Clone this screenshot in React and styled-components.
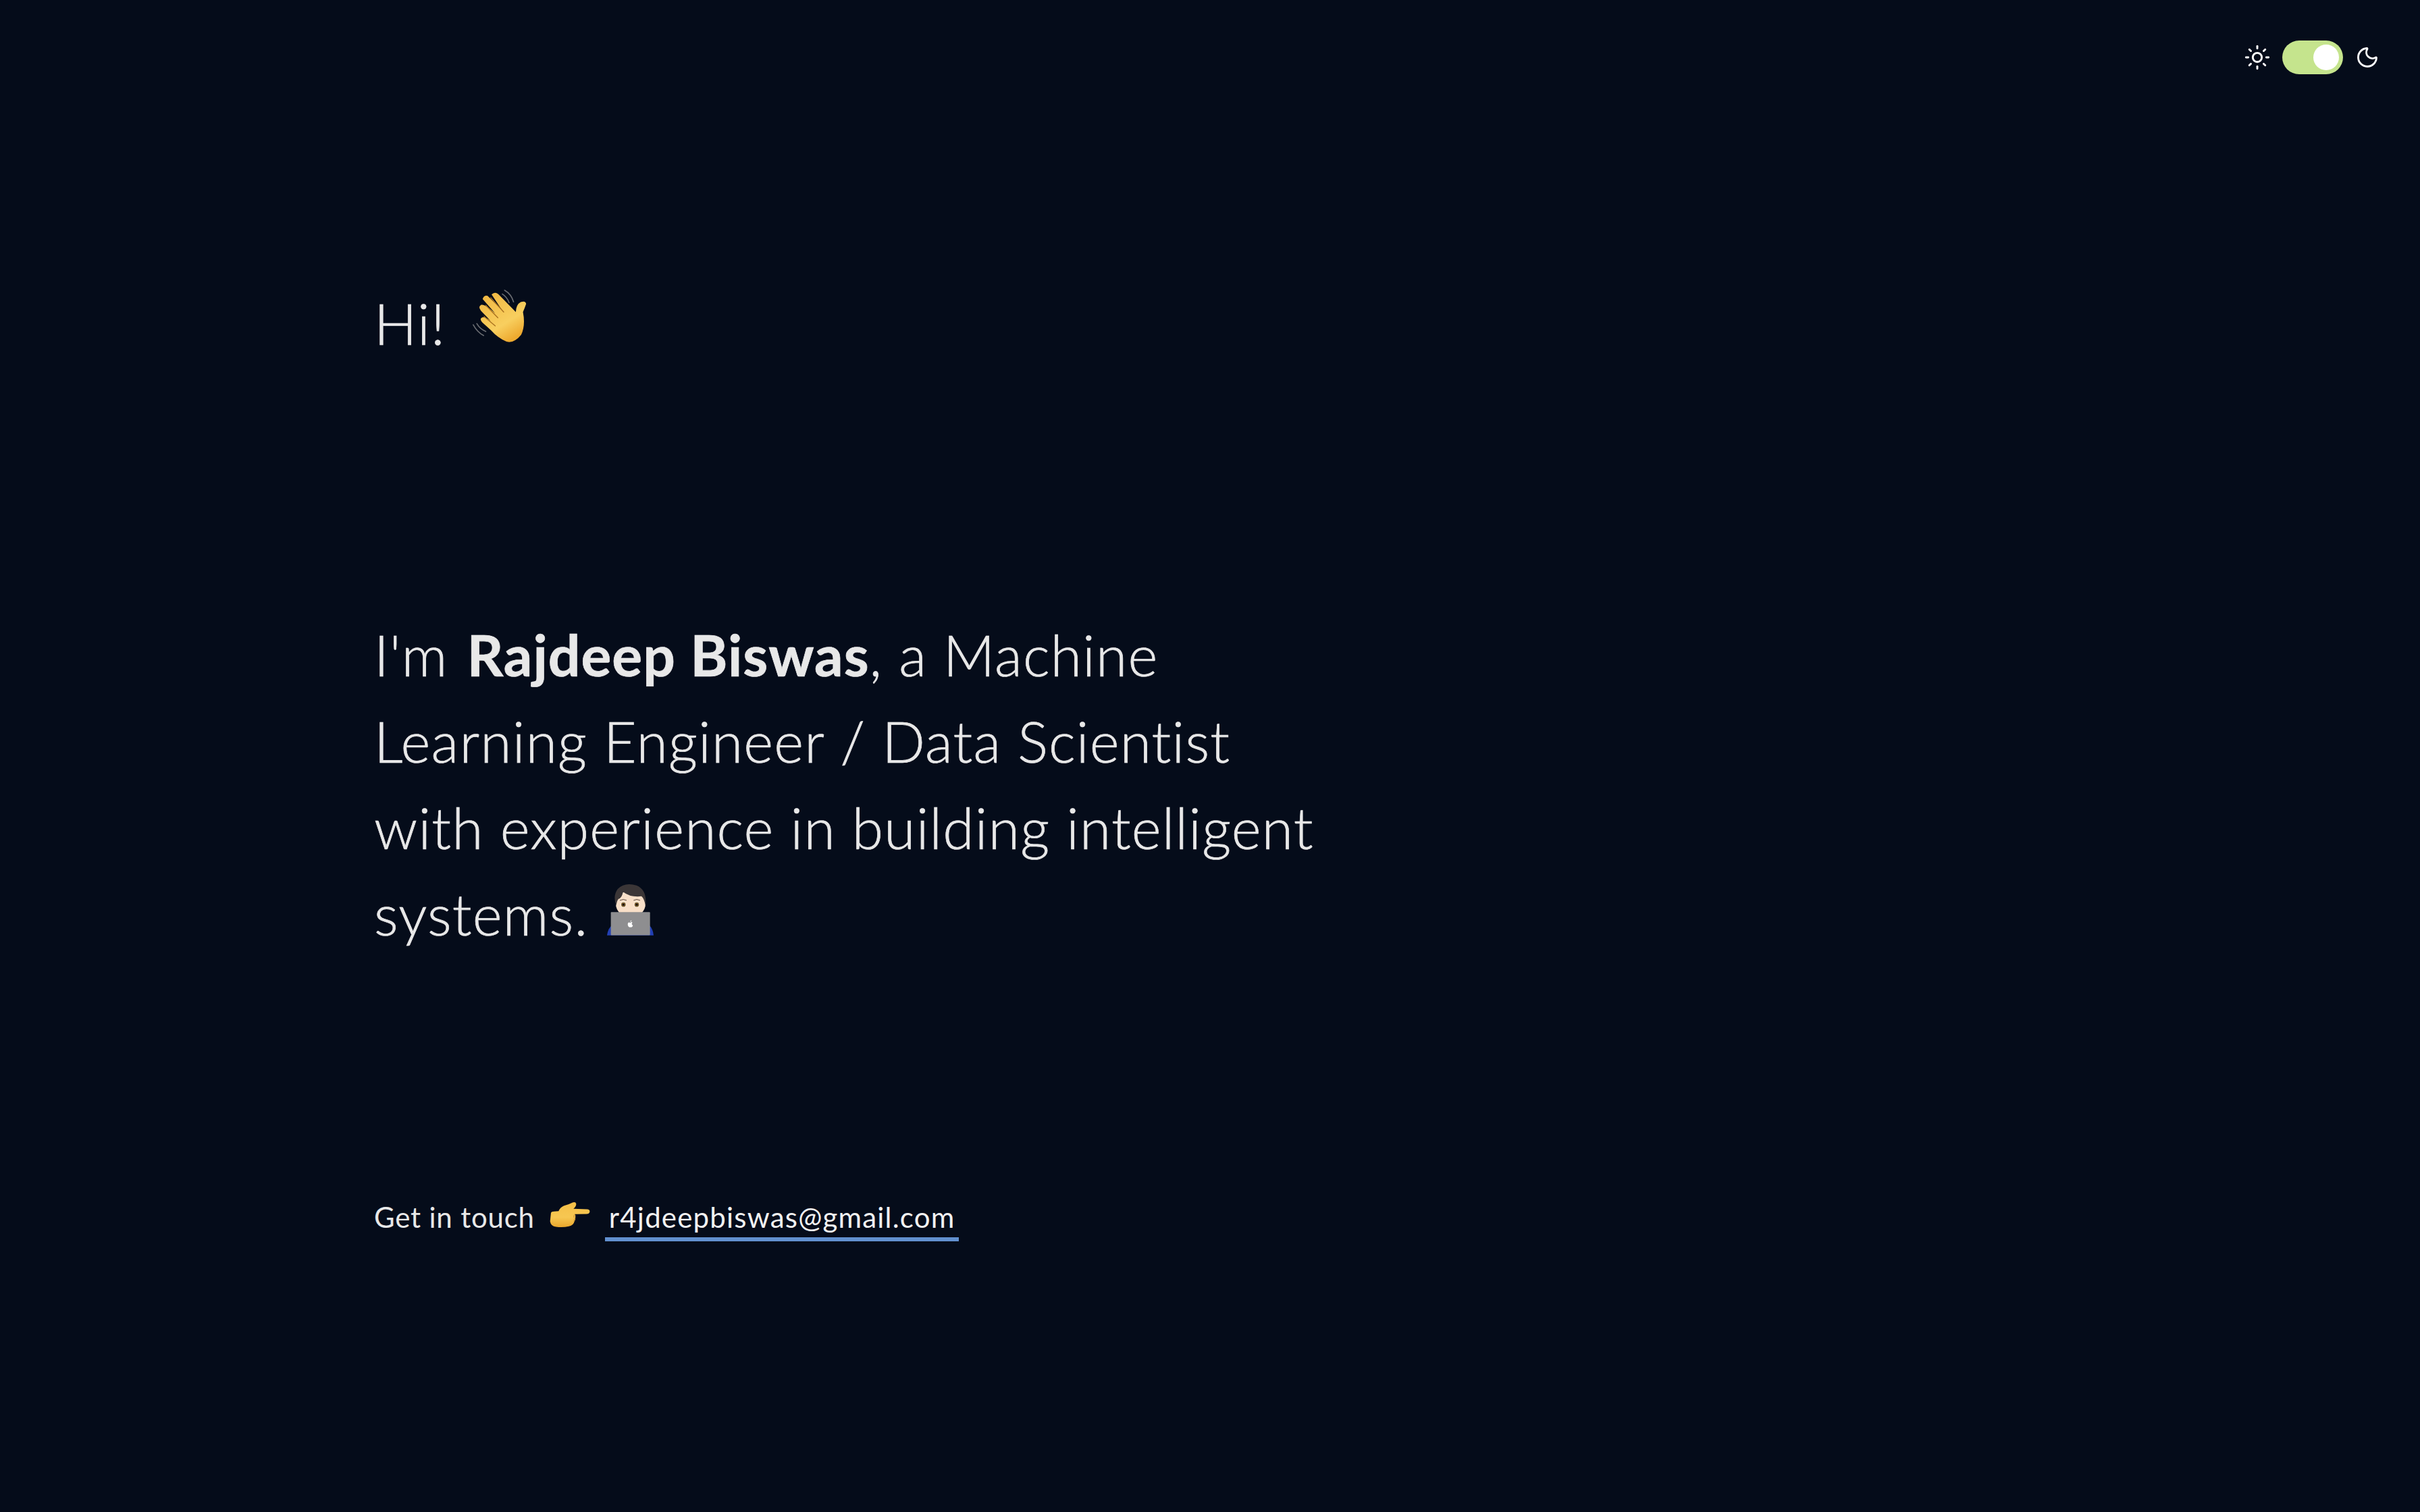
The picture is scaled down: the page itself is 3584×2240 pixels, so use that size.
import React from 'react';
import styled, { createGlobalStyle } from 'styled-components';
import { Sun, Moon } from 'lucide-react';

const GlobalStyle = createGlobalStyle`
  html, body {
    margin: 0;
    padding: 0;
    background-color: #050c1a;
  }
`;

const Page = styled.div`
  width: 3584px;
  height: 2240px;
  background-color: #050c1a;
  color: #e8e8e8;
  font-family: Lato, "Noto Sans", sans-serif;
  overflow: hidden;
`;

const ThemeBar = styled.header`
  display: flex;
  justify-content: flex-end;
  align-items: center;
  gap: 18px;
  padding: 60px 60px 0 0;
  height: 50px;
  color: #ffffff;
`;

const SunIcon = styled(Sun)`
  margin-right: -1px;
`;

const Track = styled.div`
  width: 90px;
  height: 50px;
  border-radius: 25px;
  background-color: #c5e48d;
  display: flex;
  align-items: center;
  justify-content: flex-end;
  padding-right: 6px;
  box-sizing: border-box;
`;

const Knob = styled.div`
  width: 38px;
  height: 38px;
  border-radius: 50%;
  background-color: #ffffff;
`;

const Main = styled.main`
  padding-left: 554px;
`;

const Greeting = styled.h1`
  display: flex;
  align-items: flex-start;
  gap: 40px;
  margin: 319px 0 0;
  font-size: 84px;
  line-height: 100px;
  font-weight: 300;
  letter-spacing: 1.2px;
  -webkit-text-stroke: 0.7px #e8e8e8;
`;

const Intro = styled.p`
  width: 1420px;
  margin: 377px 0 0;
  font-size: 84px;
  line-height: 128px;
  font-weight: 300;
  letter-spacing: 1.2px;
  -webkit-text-stroke: 0.7px #e8e8e8;
  b {
    font-weight: 700;
    margin-left: 4px;
    letter-spacing: 1px;
  }
`;

const Contact = styled.div`
  display: flex;
  align-items: baseline;
  margin: 355px 0 0;
  font-size: 42px;
  line-height: 60px;
  font-weight: 400;
  letter-spacing: 0.8px;
`;

const Email = styled.a`
  color: #f2f2f2;
  padding: 0 6px;
  border-bottom: 6px solid #6190cf;
  margin-left: 22px;
  letter-spacing: 1.2px;
`;

const Emoji = styled.svg`
  display: ${({ $inline }) => ($inline ? 'inline-block' : 'block')};
  flex: none;
  margin-left: ${({ $left }) => $left || 0}px;
`;

const WaveEmoji = () => (
  <Emoji width="80" height="78" viewBox="30 30 240 235">
    <defs>
      <linearGradient id="waveSkin" x1="0" y1="0" x2="0.6" y2="1">
        <stop offset="0" stopColor="#f0b53f" />
        <stop offset="0.7" stopColor="#f8cf5f" />
        <stop offset="1" stopColor="#eeaa30" />
      </linearGradient>
    </defs>
    <g fill="none" stroke="#6a6d72" strokeWidth="5" strokeLinecap="round">
      <path d="M32 187 Q50 220 78 235" />
      <path d="M48 182 Q62 206 88 217" />
      <path d="M162 50 Q182 62 192 88" />
      <path d="M172 33 Q202 50 212 85" />
    </g>
    <path
      d="M74 72 Q80 54 96 58 L158 118 L114 52 Q128 38 144 50 L222 130 Q224 96 244 86 Q266 78 268 94 Q262 112 254 130 Q266 190 246 232 Q214 272 180 262 Q140 244 112 212 L72 176 Q58 160 72 154 Q86 150 110 170 L66 124 Q52 106 68 98 Q84 94 130 136 Z"
      fill="url(#waveSkin)"
    />
    <g fill="none" stroke="#a8701f" strokeWidth="4" strokeLinecap="round">
      <path d="M110 66 L168 130" />
      <path d="M88 100 L142 156" />
      <path d="M80 150 L130 192" />
    </g>
  </Emoji>
);

const CoderEmoji = () => (
  <Emoji $inline $left={28} width="69" height="76" viewBox="25 25 207 227">
    <path d="M25 252 Q28 222 48 205 L212 205 Q230 224 232 252 Z" fill="#2340b4" />
    <ellipse cx="130" cy="112" rx="66" ry="60" fill="#f8dfc8" />
    <path
      d="M66 120 Q50 76 72 46 Q104 14 156 30 Q204 50 196 120 Q190 88 178 78 Q130 84 96 58 Q92 84 76 90 Q68 100 66 120 Z"
      fill="#3b3637"
    />
    <circle cx="98" cy="115" r="13" fill="#fff5e8" />
    <circle cx="157" cy="115" r="13" fill="#fff5e8" />
    <circle cx="98" cy="115" r="10" fill="#7d5f30" />
    <circle cx="157" cy="115" r="10" fill="#7d5f30" />
    <circle cx="98" cy="115" r="5" fill="#1c1410" />
    <circle cx="157" cy="115" r="5" fill="#1c1410" />
    <path d="M82 96 Q98 88 112 96" fill="none" stroke="#5a4a40" strokeWidth="3" />
    <path d="M143 96 Q157 88 172 96" fill="none" stroke="#5a4a40" strokeWidth="3" />
    <rect x="42" y="148" width="174" height="103" rx="3" fill="#8e8e90" />
    <path
      d="M128 196 Q118 190 117 204 Q120 218 128 215 Q136 218 140 208 Q131 202 138 194 Q133 190 128 196 Z M128 192 Q128 186 134 184 Q134 190 128 192 Z"
      fill="#ffffff"
    />
  </Emoji>
);

const PointEmoji = () => (
  <Emoji $left={22} width="60" height="39" viewBox="42 42 180 116">
    <defs>
      <linearGradient id="pointSkin" x1="0" y1="0" x2="0" y2="1">
        <stop offset="0" stopColor="#f5bf47" />
        <stop offset="0.6" stopColor="#f7c752" />
        <stop offset="1" stopColor="#e9a62c" />
      </linearGradient>
    </defs>
    <path
      d="M48 92 Q50 86 62 86 L82 84 Q88 68 106 60 Q130 54 144 46 Q158 42 160 52 Q160 64 148 74 L210 76 Q222 78 220 88 Q218 97 206 97 L154 98 Q160 106 156 114 Q158 124 152 130 Q148 148 128 152 Q100 158 70 154 Q48 152 44 130 Z"
      fill="url(#pointSkin)"
    />
    <path d="M154 98 Q148 104 150 112 M156 114 Q150 120 150 130" fill="none" stroke="#c98d2a" strokeWidth="3" strokeLinecap="round" />
  </Emoji>
);

const App = () => {
  return (
    <Page>
      <GlobalStyle />
      <ThemeBar>
        <SunIcon size={40} strokeWidth={1.75} />
        <Track>
          <Knob />
        </Track>
        <Moon size={36} strokeWidth={1.9} />
      </ThemeBar>
      <Main>
        <Greeting>
          Hi!
          <WaveEmoji />
        </Greeting>
        <Intro>
          I'm <b>Rajdeep Biswas</b>, a Machine Learning Engineer / Data Scientist with experience in building
          intelligent systems.
          <CoderEmoji />
        </Intro>
        <Contact>
          Get in touch
          <PointEmoji />
          <Email>r4jdeepbiswas@gmail.com</Email>
        </Contact>
      </Main>
    </Page>
  );
};

export default App;
